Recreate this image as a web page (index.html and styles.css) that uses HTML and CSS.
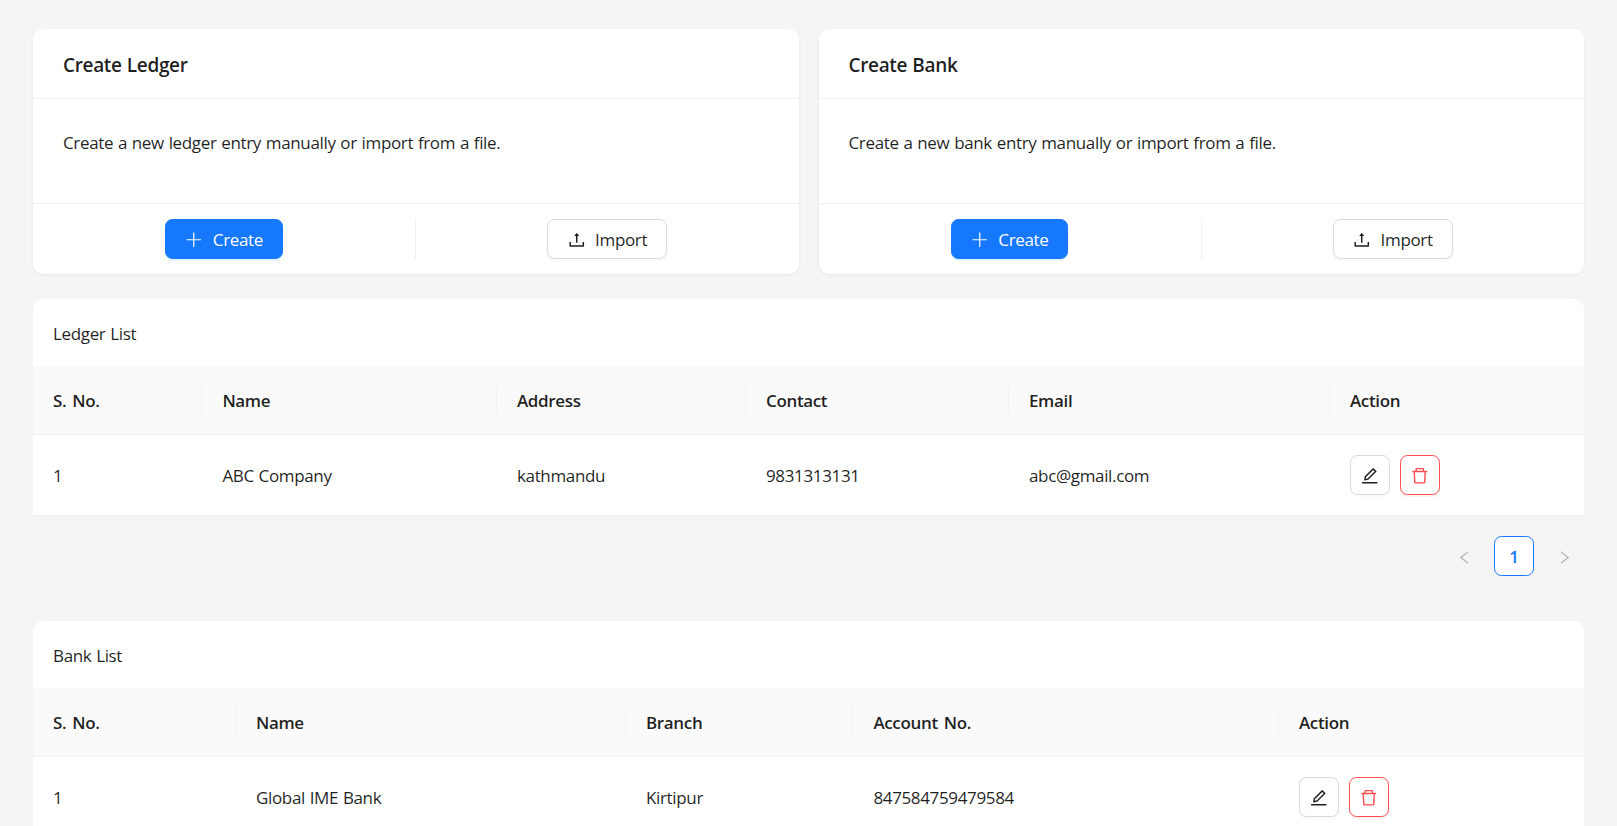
FILE: index.html
```html
<!DOCTYPE html>
<html lang="en">
<head>
  <meta charset="UTF-8" />
  <meta name="viewport" content="width=device-width, initial-scale=1.0" />
  <title>Ledger and Bank</title>
  <link rel="stylesheet" href="styles.css">
</head>
<body>
  <svg class="sprite" xmlns="http://www.w3.org/2000/svg">
    <symbol id="plus" viewBox="64 64 896 896"><path d="M482 144h60v736h-60z"/><path d="M144 482h736v60H144z"/></symbol>
    <symbol id="upload" viewBox="64 64 896 896"><path d="M400 317.7h73.9V656c0 4.4 3.6 8 8 8h60c4.4 0 8-3.6 8-8V317.7H624c6.7 0 10.4-7.7 6.3-12.9L518.3 163a8 8 0 00-12.6 0l-112 141.7c-4.1 5.3-.4 13 6.3 13zM878 626h-60c-4.4 0-8 3.6-8 8v154H214V634c0-4.4-3.6-8-8-8h-60c-4.4 0-8 3.6-8 8v198c0 17.7 14.3 32 32 32h684c17.7 0 32-14.3 32-32V634c0-4.4-3.6-8-8-8z"/></symbol>
    <symbol id="edit" viewBox="64 64 896 896"><path d="M257.7 752c2 0 4-.2 6-.5L431.9 722c2-.4 3.9-1.3 5.3-2.8l423.9-423.9a9.96 9.96 0 000-14.1L694.9 114.9c-1.9-1.9-4.4-2.9-7.1-2.9s-5.2 1-7.1 2.9L256.8 538.8c-1.5 1.5-2.4 3.3-2.8 5.3l-29.5 168.2a33.5 33.5 0 009.4 29.8c6.6 6.4 14.9 9.9 23.8 9.9zm67.4-174.4L687.8 215l73.3 73.3-362.7 362.6-88.9 15.7 15.6-89zM880 836H144c-17.7 0-32 14.3-32 32v36c0 4.4 3.6 8 8 8h784c4.4 0 8-3.6 8-8v-36c0-17.7-14.3-32-32-32z"/></symbol>
    <symbol id="delete" viewBox="64 64 896 896"><path d="M360 184h-8c4.4 0 8-3.6 8-8v8h304v-8c0 4.4 3.6 8 8 8h-8v72h72v-80c0-35.3-28.7-64-64-64H352c-35.3 0-64 28.7-64 64v80h72v-72zm504 72H160c-17.7 0-32 14.3-32 32v32c0 4.4 3.6 8 8 8h60.4l24.7 523c1.6 34.1 29.8 61 63.9 61h454c34.2 0 62.3-26.8 63.9-61l24.7-523H888c4.4 0 8-3.6 8-8v-32c0-17.7-14.3-32-32-32zM731.3 840H292.7l-24.2-512h487l-24.2 512z"/></symbol>
    <symbol id="left" viewBox="64 64 896 896"><path d="M724 218.3V141c0-6.7-7.7-10.4-12.9-6.3L260.3 486.8a31.86 31.86 0 000 50.3l450.8 352.1c5.3 4.1 12.9.4 12.9-6.3v-77.3c0-4.9-2.3-9.6-6.1-12.6l-360-281 360-281.1c3.8-3 6.1-7.7 6.1-12.6z"/></symbol>
    <symbol id="right" viewBox="64 64 896 896"><path d="M765.7 486.8L314.9 134.7A7.97 7.97 0 00302 141v77.3c0 4.9 2.3 9.6 6.1 12.6l360 281.1-360 281.1c-3.9 3-6.1 7.7-6.1 12.6V883c0 6.7 7.7 10.4 12.9 6.3l450.8-352.1a31.96 31.96 0 000-50.4z"/></symbol>
  </svg>

  <div class="cards">
    <div class="card">
      <h2>Create Ledger</h2>
      <p>Create a new ledger entry manually or import from a file.</p>
      <div class="card-actions">
        <div><button class="btn primary"><svg class="icon"><use href="#plus"/></svg><span>Create</span></button></div>
        <div><button class="btn"><svg class="icon"><use href="#upload"/></svg><span>Import</span></button></div>
      </div>
    </div>
    <div class="card">
      <h2>Create Bank</h2>
      <p>Create a new bank entry manually or import from a file.</p>
      <div class="card-actions">
        <div><button class="btn primary"><svg class="icon"><use href="#plus"/></svg><span>Create</span></button></div>
        <div><button class="btn"><svg class="icon"><use href="#upload"/></svg><span>Import</span></button></div>
      </div>
    </div>
  </div>

  <div class="list">
    <div class="list-title">Ledger List</div>
    <table class="ledger-table">
      <colgroup><col class="no"><col class="name"><col class="address"><col class="contact"><col class="email"><col></colgroup>
      <thead>
        <tr><th>S. No.</th><th>Name</th><th>Address</th><th>Contact</th><th>Email</th><th>Action</th></tr>
      </thead>
      <tbody>
        <tr>
          <td>1</td><td>ABC Company</td><td>kathmandu</td><td>9831313131</td><td>abc@gmail.com</td>
          <td>
            <div class="row-actions">
              <button class="btn square" aria-label="Edit"><svg class="icon"><use href="#edit"/></svg></button>
              <button class="btn square danger" aria-label="Delete"><svg class="icon"><use href="#delete"/></svg></button>
            </div>
          </td>
        </tr>
      </tbody>
    </table>
  </div>

  <div class="pagination">
    <button class="page" aria-label="Previous" disabled><svg class="icon"><use href="#left"/></svg></button>
    <button class="page active">1</button>
    <button class="page" aria-label="Next" disabled><svg class="icon"><use href="#right"/></svg></button>
  </div>

  <div class="list">
    <div class="list-title">Bank List</div>
    <table class="bank-table">
      <colgroup><col class="no"><col class="name"><col class="branch"><col class="account"><col></colgroup>
      <thead>
        <tr><th>S. No.</th><th>Name</th><th>Branch</th><th>Account No.</th><th>Action</th></tr>
      </thead>
      <tbody>
        <tr>
          <td>1</td><td>Global IME Bank</td><td>Kirtipur</td><td>847584759479584</td>
          <td>
            <div class="row-actions">
              <button class="btn square" aria-label="Edit"><svg class="icon"><use href="#edit"/></svg></button>
              <button class="btn square danger" aria-label="Delete"><svg class="icon"><use href="#delete"/></svg></button>
            </div>
          </td>
        </tr>
      </tbody>
    </table>
  </div>
</body>
</html>
```
FILE: styles.css
```css
* {
  box-sizing: border-box;
}

body {
  margin: 0;
  height: 100vh;
  padding: 29px 33px 0;
  overflow: hidden;
  background: #f5f5f5;
  color: rgba(0, 0, 0, 0.88);
  font-family: "Segoe UI", "Open Sans", sans-serif;
  font-size: 17px;
  line-height: 27px;
  letter-spacing: -0.35px;
  word-spacing: 0.7px;
}

.sprite {
  display: none;
}

.icon {
  width: 17.5px;
  height: 17.5px;
  margin-top: 1.5px;
  fill: currentColor;
  flex: none;
}

.cards {
  display: grid;
  grid-template-columns: 1fr 1fr;
  gap: 20px;
  margin-bottom: 25px;
}

.card {
  height: 245px;
  display: flex;
  flex-direction: column;
  background: #fff;
  border-radius: 10px;
  box-shadow: 0 1px 2px rgba(0, 0, 0, 0.03), 0 1px 8px -1px rgba(0, 0, 0, 0.02), 0 2px 5px rgba(0, 0, 0, 0.02);
}

.card h2 {
  margin: 0;
  height: 70px;
  padding: 0 30px;
  border-bottom: 1px solid #f0f0f0;
  font-size: 19px;
  font-weight: 600;
  line-height: 72px;
}

.card p {
  margin: 0;
  padding: 30px;
  flex: 1;
}

.card-actions {
  display: flex;
  height: 71px;
  border-top: 1px solid #f0f0f0;
  padding: 15px 0;
}

.card-actions div {
  flex: 1;
  display: flex;
  justify-content: center;
}

.card-actions div:first-child {
  border-right: 1px solid #f0f0f0;
}

.btn {
  display: flex;
  align-items: center;
  justify-content: center;
  gap: 10px;
  width: 120px;
  height: 40px;
  padding: 0;
  border: 1px solid #d9d9d9;
  border-radius: 7.5px;
  background: #fff;
  color: rgba(0, 0, 0, 0.88);
  font: inherit;
  letter-spacing: inherit;
  box-shadow: 0 2px 0 rgba(0, 0, 0, 0.02);
  cursor: pointer;
}

.btn.primary {
  width: 117.5px;
  border-color: #1677ff;
  background: #1677ff;
  color: #fff;
  box-shadow: 0 2px 0 rgba(5, 145, 255, 0.1);
}

.btn.square {
  width: 40px;
}

.btn.danger {
  border-color: #ff4d4f;
  color: #ff4d4f;
  box-shadow: 0 2px 0 rgba(255, 38, 5, 0.06);
}

.list-title {
  height: 67px;
  padding: 21px 20px 19px;
  background: #fff;
  border-radius: 10px 10px 0 0;
}

table {
  width: 100%;
  table-layout: fixed;
  border-collapse: separate;
  border-spacing: 0;
  background: #fff;
}

th {
  position: relative;
  height: 69px;
  padding: 0 20px;
  background: #fafafa;
  border-bottom: 1px solid #f0f0f0;
  font-weight: 600;
  text-align: left;
  word-spacing: 2px;
}

/* short separator between header cells */
th:not(:last-child)::after {
  content: "";
  position: absolute;
  top: 20px;
  right: 0;
  width: 1px;
  height: 28px;
  background: #f0f0f0;
}

td {
  height: 81px;
  padding: 0 20px;
  border-bottom: 1px solid #f0f0f0;
}

.ledger-table .no { width: 169.4px; }
.ledger-table .name { width: 294.6px; }
.ledger-table .address { width: 249px; }
.ledger-table .contact { width: 263px; }
.ledger-table .email { width: 321px; }

.bank-table .no { width: 203px; }
.bank-table .name { width: 390px; }
.bank-table .branch { width: 227.4px; }
.bank-table .account { width: 425.6px; }

.row-actions {
  display: flex;
  gap: 10px;
}

.pagination {
  display: flex;
  justify-content: flex-end;
  gap: 10px;
  margin: 20px 0 45px;
}

.page {
  display: flex;
  align-items: center;
  justify-content: center;
  width: 40px;
  height: 40px;
  padding: 0;
  border: 1px solid transparent;
  border-radius: 7.5px;
  background: transparent;
  color: rgba(0, 0, 0, 0.25);
  font: inherit;
}

.page .icon {
  width: 15px;
  height: 15px;
  margin-top: 2px;
}

.page.active {
  border-color: #1677ff;
  background: #fff;
  color: #1677ff;
  font-weight: 600;
}
```
